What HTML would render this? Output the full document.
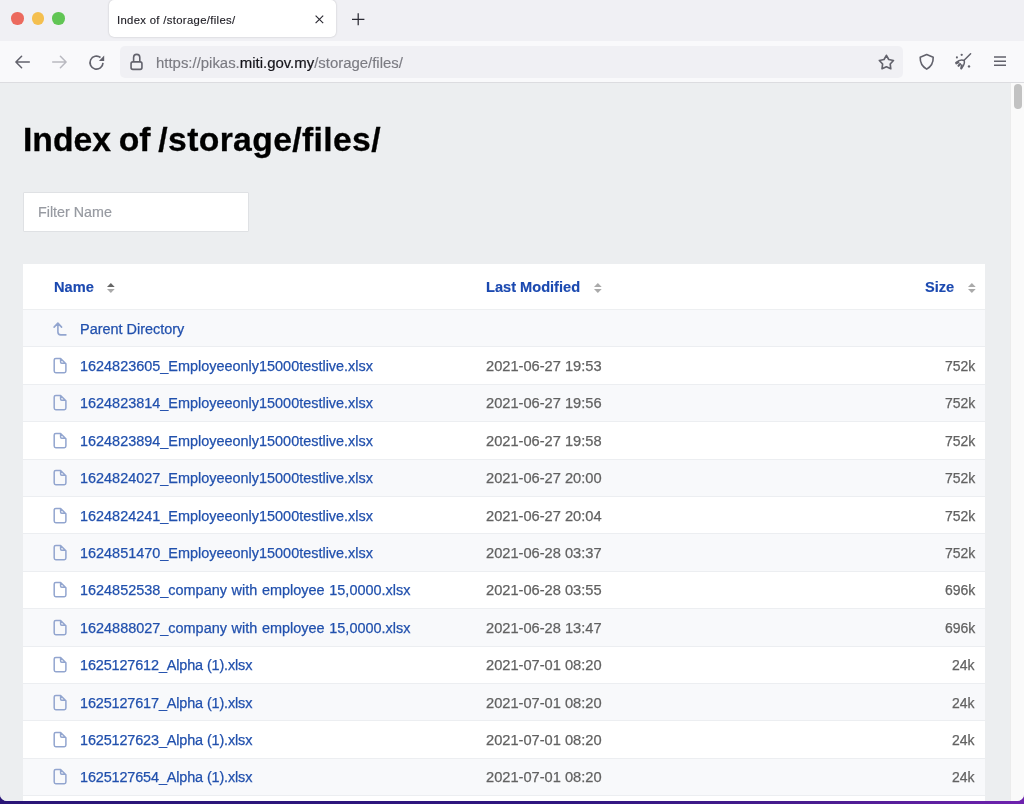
<!DOCTYPE html>
<html><head><meta charset="utf-8">
<style>
*{margin:0;padding:0;box-sizing:border-box}
html,body{width:1024px;height:804px;overflow:hidden;background:linear-gradient(90deg,#2a1577 0%,#2f1680 55%,#4a1c90 80%,#6e22ae 100%);font-family:"Liberation Sans",sans-serif}
#win{position:absolute;left:0;top:0;width:1024px;height:801px;background:#eceef0;border-radius:0 0 7px 7px;overflow:hidden}
#tabbar{position:absolute;left:0;top:0;width:1024px;height:41px;background:#f0f0f4}
.dot{position:absolute;top:12.2px;width:12.4px;height:12.4px;border-radius:50%}
#tab{position:absolute;left:109px;top:0;width:227px;height:37px;background:#fff;border-radius:5px;box-shadow:0 0 2px rgba(0,0,0,.22)}
#tab .t{position:absolute;left:8.3px;top:13.7px;font-size:11.3px;letter-spacing:0.33px;color:#222128;-webkit-text-stroke:0.15px #222128;white-space:nowrap}
#toolbar{position:absolute;left:0;top:41px;width:1024px;height:42px;background:#f9f9fb;border-bottom:1px solid #dcdce0}
#url{position:absolute;left:120px;top:4.5px;width:783px;height:32.5px;background:#f0f0f4;border-radius:5px}
#url .u{position:absolute;left:35.5px;top:8px;font-size:14.93px;color:#7b7b82;white-space:nowrap;letter-spacing:0;-webkit-text-stroke:0.15px #7b7b82}
#url .u b{font-weight:normal;color:#15141a;-webkit-text-stroke:0.2px #15141a}
svg{position:absolute;overflow:visible}
#page{position:absolute;left:0;top:83px;width:1010px;height:718px;background:#eceef0}
#sb{position:absolute;left:1010px;top:83px;width:14px;height:718px;background:#fafafa;border-left:1px solid #ececec}
#thumb{position:absolute;left:1014px;top:84px;width:8px;height:25px;border-radius:4px;background:#c2c2c2}
h1{position:absolute;left:22.5px;top:37px;font-size:33.7px;font-weight:bold;color:#000;white-space:nowrap;word-spacing:-1.6px;-webkit-text-stroke:0.3px #000}
#filter{position:absolute;left:23px;top:109px;width:226px;height:40px;background:#fff;border:1px solid #dfe1e4;border-radius:1px}
#filter span{position:absolute;left:13.6px;top:11.1px;font-size:14.3px;color:#979aa1;-webkit-text-stroke:0.2px #979aa1}
#table{position:absolute;left:23px;top:181px;width:962px;height:560px;background:#fff}
.hdr{position:absolute;top:0;left:0;width:962px;height:46px;border-bottom:1px solid #edeff1;background:#fff}
.hdr span{position:absolute;top:14.9px;font-size:14.6px;font-weight:bold;color:#1b49b0;white-space:nowrap;-webkit-text-stroke:0.15px #1b49b0}
.row{position:absolute;left:0;width:962px;height:37.4px;border-bottom:1px solid #eceef1}
.row.g{background:#f8f9fb}
.row .n{position:absolute;left:57px;top:10.5px;font-size:14.44px;color:#2150ad;white-space:nowrap;-webkit-text-stroke:0.25px #2150ad}
.row .d{position:absolute;left:463px;top:10.5px;font-size:14.65px;color:#626262;white-space:nowrap;-webkit-text-stroke:0.25px #626262}
.row .s{position:absolute;right:10px;top:10.5px;font-size:13.97px;color:#626262;white-space:nowrap;-webkit-text-stroke:0.25px #626262}
.row svg{left:25px;top:6.6px}
span,h1{will-change:transform}
</style></head><body>
<div id="win">
<div id="tabbar">
  <div class="dot" style="left:11.2px;background:#ec6a5e"></div>
  <div class="dot" style="left:31.6px;background:#f4bf4f"></div>
  <div class="dot" style="left:52.3px;background:#61c554"></div>
  <div id="tab"><span class="t">Index of /storage/files/</span>
    <svg style="left:206.3px;top:15px" width="9" height="9" viewBox="0 0 9 9"><path d="M0.6 0.6L8.2 8.2M8.2 0.6L0.6 8.2" stroke="#2b2a33" stroke-width="1.15"/></svg>
  </div>
  <svg style="left:352px;top:12.8px" width="13" height="13" viewBox="0 0 13 13"><path d="M6.2 0.3V12.3M0 6.3H12.4" stroke="#2b2a33" stroke-width="1.25"/></svg>
</div>
<div id="toolbar">
  <svg style="left:15px;top:14.2px" width="15" height="14" viewBox="0 0 15 14"><path d="M14.3 7H1.3M6.6 1.2L0.9 7L6.6 12.8" fill="none" stroke="#62626c" stroke-width="1.5" stroke-linecap="round" stroke-linejoin="round"/></svg>
  <svg style="left:52px;top:14.2px" width="15" height="14" viewBox="0 0 15 14"><path d="M0.7 7H13.7M8.4 1.2L14.1 7L8.4 12.8" fill="none" stroke="#b9b9c0" stroke-width="1.5" stroke-linecap="round" stroke-linejoin="round"/></svg>
  <svg style="left:89px;top:14px" width="16" height="15" viewBox="0 0 16 15"><path d="M14 7.9A6.5 6.5 0 1 1 11.5 2.5" fill="none" stroke="#62626c" stroke-width="1.6"/><path d="M15.2 0.6V5.9H9.9Z" fill="#62626c"/></svg>
  <div id="url">
    <svg style="left:10px;top:8px" width="13" height="17" viewBox="0 0 13 17"><path d="M3.6 7.9V3.5A3.1 3.1 0 0 1 9.8 3.5V7.9" fill="none" stroke="#62626c" stroke-width="1.6"/><rect x="1.05" y="7.9" width="10.9" height="7.5" rx="1.8" fill="none" stroke="#62626c" stroke-width="1.6"/></svg>
    <span class="u">https://pikas.<b>miti.gov.my</b>/storage/files/</span>
    <svg style="left:758px;top:9px" width="17" height="16" viewBox="0 0 17 16"><path d="M8.40 0.35L10.75 4.51L15.44 5.46L12.20 8.99L12.75 13.74L8.40 11.75L4.05 13.74L4.60 8.99L1.36 5.46L6.05 4.51Z" fill="none" stroke="#62626c" stroke-width="1.7" stroke-linejoin="round"/></svg>
  </div>
  <svg style="left:918.5px;top:12px" width="16" height="17" viewBox="0 0 16 17"><path d="M7.7 1.6L14.2 4.3C14.4 10 11.9 13.8 7.7 16.1C3.5 13.8 1 10 1.2 4.3Z" fill="none" stroke="#62626c" stroke-width="1.6" stroke-linejoin="round"/></svg>
  <svg style="left:955px;top:12px" width="17" height="17" viewBox="0 0 17 17"><path d="M15.6 0.8L9.1 7.3" stroke="#62626c" stroke-width="1.5" stroke-linecap="round"/><path d="M1 9.5Q5 6.1 9.2 7.5Q10.2 10.9 6.6 15.4" fill="none" stroke="#62626c" stroke-width="1.5" stroke-linecap="round"/><path d="M3.4 9.2L1.3 10.3M5.1 11L3.5 12.8M6.8 12.4L6.2 15.4" stroke="#62626c" stroke-width="2.1" stroke-linecap="round"/><circle cx="6.7" cy="1.8" r="1.15" fill="#62626c"/><circle cx="1.9" cy="4.4" r="1.05" fill="#62626c"/><circle cx="14" cy="13.4" r="1.2" fill="#62626c"/></svg>
  <svg style="left:994.3px;top:14px" width="13" height="11" viewBox="0 0 13 11"><path d="M0 2H12M0 6.2H12M0 10.3H12" stroke="#62626c" stroke-width="1.6"/></svg>
</div>
<div id="page">
  <h1>Index of <span style="letter-spacing:0.36px">/storage/files/</span></h1>
  <div id="filter"><span>Filter Name</span></div>
  <div id="table">
    <div class="hdr">
      <span style="left:31px">Name</span>
      <svg style="left:84.1px;top:18.8px" width="8" height="10" viewBox="0 0 8 10"><path d="M3.85 0L7.7 4H0Z" fill="#666"/><path d="M3.85 10L7.7 6H0Z" fill="#aaa"/></svg>
      <span style="left:463px">Last Modified</span>
      <svg style="left:571px;top:18.8px" width="8" height="10" viewBox="0 0 8 10"><path d="M3.85 0L7.7 4H0Z" fill="#aaa"/><path d="M3.85 10L7.7 6H0Z" fill="#aaa"/></svg>
      <span style="left:902px">Size</span>
      <svg style="left:944.7px;top:18.8px" width="8" height="10" viewBox="0 0 8 10"><path d="M3.85 0L7.7 4H0Z" fill="#aaa"/><path d="M3.85 10L7.7 6H0Z" fill="#aaa"/></svg>
    </div>
    <div class="row g" style="top:46px"><svg width="24" height="24" viewBox="0 0 24 24"><path d="M6.1 10.1L9.9 6.1L13.6 10.1M9.9 6.6V15Q9.9 17.9 12.8 17.9H17.9" fill="none" stroke="#92a5cf" stroke-width="1.6" stroke-linecap="round" stroke-linejoin="round"/></svg><span class="n">Parent Directory</span></div>
<div class="row" style="top:83.40px"><svg width="24" height="24" viewBox="0 0 24 24"><path d="M6.2 6.1Q6.2 4.5 7.8 4.5H12.6L17.9 9.7V17.1Q17.9 18.7 16.3 18.7H7.8Q6.2 18.7 6.2 17.1Z M12.6 4.7V8.1Q12.6 9.2 13.7 9.2H17.7" fill="none" stroke="#92a5cf" stroke-width="1.5" stroke-linejoin="round"/></svg><span class="n">1624823605_Employeeonly15000testlive.xlsx</span><span class="d">2021-06-27 19:53</span><span class="s">752k</span></div>
<div class="row g" style="top:120.80px"><svg width="24" height="24" viewBox="0 0 24 24"><path d="M6.2 6.1Q6.2 4.5 7.8 4.5H12.6L17.9 9.7V17.1Q17.9 18.7 16.3 18.7H7.8Q6.2 18.7 6.2 17.1Z M12.6 4.7V8.1Q12.6 9.2 13.7 9.2H17.7" fill="none" stroke="#92a5cf" stroke-width="1.5" stroke-linejoin="round"/></svg><span class="n">1624823814_Employeeonly15000testlive.xlsx</span><span class="d">2021-06-27 19:56</span><span class="s">752k</span></div>
<div class="row" style="top:158.20px"><svg width="24" height="24" viewBox="0 0 24 24"><path d="M6.2 6.1Q6.2 4.5 7.8 4.5H12.6L17.9 9.7V17.1Q17.9 18.7 16.3 18.7H7.8Q6.2 18.7 6.2 17.1Z M12.6 4.7V8.1Q12.6 9.2 13.7 9.2H17.7" fill="none" stroke="#92a5cf" stroke-width="1.5" stroke-linejoin="round"/></svg><span class="n">1624823894_Employeeonly15000testlive.xlsx</span><span class="d">2021-06-27 19:58</span><span class="s">752k</span></div>
<div class="row g" style="top:195.60px"><svg width="24" height="24" viewBox="0 0 24 24"><path d="M6.2 6.1Q6.2 4.5 7.8 4.5H12.6L17.9 9.7V17.1Q17.9 18.7 16.3 18.7H7.8Q6.2 18.7 6.2 17.1Z M12.6 4.7V8.1Q12.6 9.2 13.7 9.2H17.7" fill="none" stroke="#92a5cf" stroke-width="1.5" stroke-linejoin="round"/></svg><span class="n">1624824027_Employeeonly15000testlive.xlsx</span><span class="d">2021-06-27 20:00</span><span class="s">752k</span></div>
<div class="row" style="top:233.00px"><svg width="24" height="24" viewBox="0 0 24 24"><path d="M6.2 6.1Q6.2 4.5 7.8 4.5H12.6L17.9 9.7V17.1Q17.9 18.7 16.3 18.7H7.8Q6.2 18.7 6.2 17.1Z M12.6 4.7V8.1Q12.6 9.2 13.7 9.2H17.7" fill="none" stroke="#92a5cf" stroke-width="1.5" stroke-linejoin="round"/></svg><span class="n">1624824241_Employeeonly15000testlive.xlsx</span><span class="d">2021-06-27 20:04</span><span class="s">752k</span></div>
<div class="row g" style="top:270.40px"><svg width="24" height="24" viewBox="0 0 24 24"><path d="M6.2 6.1Q6.2 4.5 7.8 4.5H12.6L17.9 9.7V17.1Q17.9 18.7 16.3 18.7H7.8Q6.2 18.7 6.2 17.1Z M12.6 4.7V8.1Q12.6 9.2 13.7 9.2H17.7" fill="none" stroke="#92a5cf" stroke-width="1.5" stroke-linejoin="round"/></svg><span class="n">1624851470_Employeeonly15000testlive.xlsx</span><span class="d">2021-06-28 03:37</span><span class="s">752k</span></div>
<div class="row" style="top:307.80px"><svg width="24" height="24" viewBox="0 0 24 24"><path d="M6.2 6.1Q6.2 4.5 7.8 4.5H12.6L17.9 9.7V17.1Q17.9 18.7 16.3 18.7H7.8Q6.2 18.7 6.2 17.1Z M12.6 4.7V8.1Q12.6 9.2 13.7 9.2H17.7" fill="none" stroke="#92a5cf" stroke-width="1.5" stroke-linejoin="round"/></svg><span class="n" style="word-spacing:0.7px">1624852538_company with employee 15,0000.xlsx</span><span class="d">2021-06-28 03:55</span><span class="s">696k</span></div>
<div class="row g" style="top:345.20px"><svg width="24" height="24" viewBox="0 0 24 24"><path d="M6.2 6.1Q6.2 4.5 7.8 4.5H12.6L17.9 9.7V17.1Q17.9 18.7 16.3 18.7H7.8Q6.2 18.7 6.2 17.1Z M12.6 4.7V8.1Q12.6 9.2 13.7 9.2H17.7" fill="none" stroke="#92a5cf" stroke-width="1.5" stroke-linejoin="round"/></svg><span class="n" style="word-spacing:0.7px">1624888027_company with employee 15,0000.xlsx</span><span class="d">2021-06-28 13:47</span><span class="s">696k</span></div>
<div class="row" style="top:382.60px"><svg width="24" height="24" viewBox="0 0 24 24"><path d="M6.2 6.1Q6.2 4.5 7.8 4.5H12.6L17.9 9.7V17.1Q17.9 18.7 16.3 18.7H7.8Q6.2 18.7 6.2 17.1Z M12.6 4.7V8.1Q12.6 9.2 13.7 9.2H17.7" fill="none" stroke="#92a5cf" stroke-width="1.5" stroke-linejoin="round"/></svg><span class="n" style="letter-spacing:-0.14px">1625127612_Alpha (1).xlsx</span><span class="d">2021-07-01 08:20</span><span class="s">24k</span></div>
<div class="row g" style="top:420.00px"><svg width="24" height="24" viewBox="0 0 24 24"><path d="M6.2 6.1Q6.2 4.5 7.8 4.5H12.6L17.9 9.7V17.1Q17.9 18.7 16.3 18.7H7.8Q6.2 18.7 6.2 17.1Z M12.6 4.7V8.1Q12.6 9.2 13.7 9.2H17.7" fill="none" stroke="#92a5cf" stroke-width="1.5" stroke-linejoin="round"/></svg><span class="n" style="letter-spacing:-0.14px">1625127617_Alpha (1).xlsx</span><span class="d">2021-07-01 08:20</span><span class="s">24k</span></div>
<div class="row" style="top:457.40px"><svg width="24" height="24" viewBox="0 0 24 24"><path d="M6.2 6.1Q6.2 4.5 7.8 4.5H12.6L17.9 9.7V17.1Q17.9 18.7 16.3 18.7H7.8Q6.2 18.7 6.2 17.1Z M12.6 4.7V8.1Q12.6 9.2 13.7 9.2H17.7" fill="none" stroke="#92a5cf" stroke-width="1.5" stroke-linejoin="round"/></svg><span class="n" style="letter-spacing:-0.14px">1625127623_Alpha (1).xlsx</span><span class="d">2021-07-01 08:20</span><span class="s">24k</span></div>
<div class="row g" style="top:494.80px"><svg width="24" height="24" viewBox="0 0 24 24"><path d="M6.2 6.1Q6.2 4.5 7.8 4.5H12.6L17.9 9.7V17.1Q17.9 18.7 16.3 18.7H7.8Q6.2 18.7 6.2 17.1Z M12.6 4.7V8.1Q12.6 9.2 13.7 9.2H17.7" fill="none" stroke="#92a5cf" stroke-width="1.5" stroke-linejoin="round"/></svg><span class="n" style="letter-spacing:-0.14px">1625127654_Alpha (1).xlsx</span><span class="d">2021-07-01 08:20</span><span class="s">24k</span></div>
<div class="row" style="top:532.20px"><svg width="24" height="24" viewBox="0 0 24 24"><path d="M6.2 6.1Q6.2 4.5 7.8 4.5H12.6L17.9 9.7V17.1Q17.9 18.7 16.3 18.7H7.8Q6.2 18.7 6.2 17.1Z M12.6 4.7V8.1Q12.6 9.2 13.7 9.2H17.7" fill="none" stroke="#92a5cf" stroke-width="1.5" stroke-linejoin="round"/></svg><span class="n" style="letter-spacing:-0.14px">1625127660_Alpha (1).xlsx</span><span class="d">2021-07-01 08:20</span><span class="s">24k</span></div>
  </div>
</div>
<div id="sb"></div>
<div id="thumb"></div>
</div>
</body></html>
